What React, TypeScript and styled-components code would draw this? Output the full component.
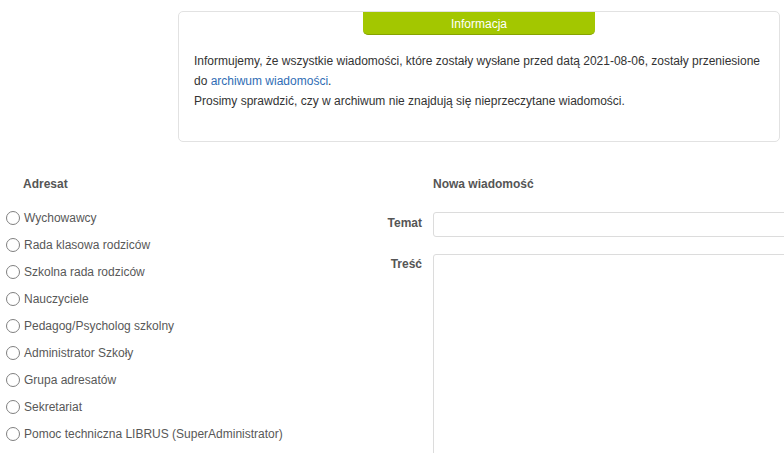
import React from 'react';
import styled, { createGlobalStyle } from 'styled-components';

const GlobalStyle = createGlobalStyle`
  html, body {
    margin: 0;
    padding: 0;
    background: #fff;
    overflow: hidden;
  }
  body {
    font-family: "Liberation Sans", Arial, sans-serif;
    font-size: 12px;
    color: #333;
  }
`;

const Page = styled.div`
  width: 784px;
  height: 453px;
  padding-top: 11px;
  box-sizing: border-box;
  overflow: hidden;
`;

const InfoBox = styled.div`
  margin-left: 178px;
  width: 600px;
  height: 129px;
  border: 1px solid #e2e2e2;
  border-radius: 5px;
  display: flex;
  flex-direction: column;
  align-items: center;
`;

const InfoTab = styled.div`
  width: 232px;
  height: 20px;
  padding-top: 2px;
  background: #a3c700;
  border-bottom: 1px solid #86a300;
  border-radius: 0 0 5px 5px;
  color: #fff;
  font-size: 12px;
  line-height: 20px;
  text-align: center;
`;

const InfoText = styled.p`
  align-self: stretch;
  margin: 16px 0 0;
  padding: 0 15px;
  line-height: 20px;
  color: #333;
`;

const Link = styled.a`
  color: #2f6db5;
  text-decoration: none;
`;

const Columns = styled.div`
  display: flex;
  margin-top: 34px;
`;

const Recipients = styled.div`
  width: 380px;
  flex-shrink: 0;
`;

const Heading = styled.div<{ $indent?: number }>`
  font-weight: bold;
  color: #555;
  line-height: 16px;
  padding-left: ${p => p.$indent ?? 0}px;
`;

const RadioList = styled.div`
  margin-top: 12px;
  display: flex;
  flex-direction: column;
`;

const RadioRow = styled.label`
  display: flex;
  align-items: center;
  height: 27px;
  padding-left: 6px;
  color: #585858;
  cursor: pointer;
`;

const RadioCircle = styled.span`
  width: 12px;
  height: 12px;
  border: 1px solid #808080;
  border-radius: 50%;
  margin-right: 4px;
  flex-shrink: 0;
`;

const Form = styled.div`
  display: grid;
  grid-template-columns: 42px 400px;
  column-gap: 11px;
  row-gap: 17px;
  align-items: start;
`;

const HeadingRow = styled.div`
  grid-column: 2;
  margin-bottom: 3px;
`;

const Label = styled.div<{ $pad?: number }>`
  font-weight: bold;
  color: #555;
  text-align: right;
  line-height: 16px;
  padding-top: ${p => p.$pad ?? 3}px;
`;

const Field = styled.div<{ $height: number }>`
  height: ${p => p.$height}px;
  border: 1px solid #dcdcdc;
  border-radius: 3px;
  background: #fff;
`;

const recipients = [
  'Wychowawcy',
  'Rada klasowa rodziców',
  'Szkolna rada rodziców',
  'Nauczyciele',
  'Pedagog/Psycholog szkolny',
  'Administrator Szkoły',
  'Grupa adresatów',
  'Sekretariat',
  'Pomoc techniczna LIBRUS (SuperAdministrator)',
];

export default function App() {
  return (
    <>
      <GlobalStyle />
      <Page>
        <InfoBox>
          <InfoTab>Informacja</InfoTab>
          <InfoText>
            Informujemy, że wszystkie wiadomości, które zostały wysłane przed datą 2021-08-06, zostały przeniesione
            <br />
            do <Link href="#">archiwum wiadomości</Link>.
            <br />
            Prosimy sprawdzić, czy w archiwum nie znajdują się nieprzeczytane wiadomości.
          </InfoText>
        </InfoBox>
        <Columns>
          <Recipients>
            <Heading $indent={23}>Adresat</Heading>
            <RadioList>
              {recipients.map(r => (
                <RadioRow key={r}>
                  <RadioCircle />
                  {r}
                </RadioRow>
              ))}
            </RadioList>
          </Recipients>
          <Form>
            <HeadingRow>
              <Heading>Nowa wiadomość</Heading>
            </HeadingRow>
            <Label>Temat</Label>
            <Field $height={23} />
            <Label $pad={2}>Treść</Label>
            <Field $height={250} />
          </Form>
        </Columns>
      </Page>
    </>
  );
}
